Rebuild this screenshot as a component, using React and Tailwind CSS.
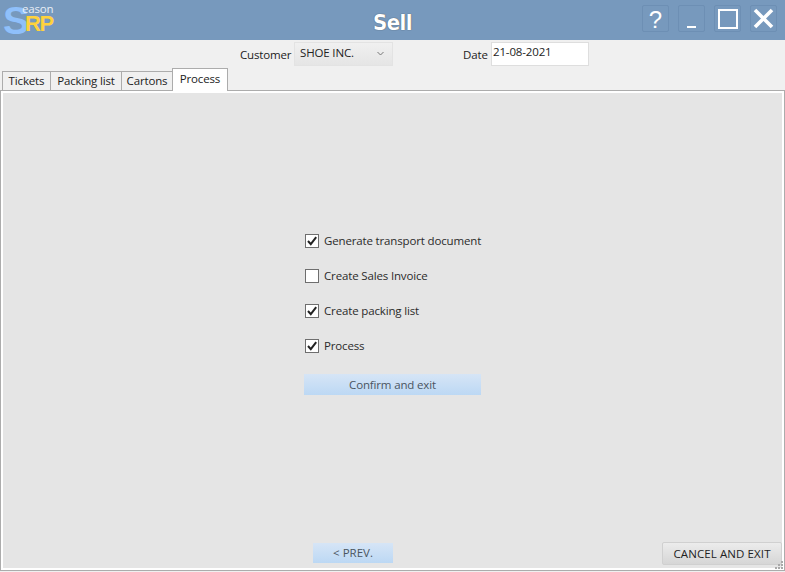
import { useState } from "react"

const font = { fontFamily: '"Open Sans", "Noto Sans", sans-serif' }
const arial = { fontFamily: '"Liberation Sans", sans-serif' }

function WinButton({ children }) {
  return (
    <div className="w-[27px] h-[27px] rounded-[2px] border border-[#6d8fb4] flex items-center justify-center">
      {children}
    </div>
  )
}

function Check({ label, checked }) {
  const [on, setOn] = useState(checked)
  return (
    <div className="flex items-center h-[14px] cursor-default" onClick={() => setOn(!on)}>
      <div className="w-[14px] h-[14px] border border-[#6e6e6e] bg-white flex items-center justify-center">
        {on && (
          <svg width="12" height="12" viewBox="0 0 12 12">
            <path d="M2 6 L4.8 9.2 L10.2 2.2" fill="none" stroke="#222" strokeWidth="2" />
          </svg>
        )}
      </div>
      <span className="ml-[5px] text-[11.5px] leading-none tracking-[-0.15px] text-[#2b2b2b] whitespace-nowrap">{label}</span>
    </div>
  )
}

export default function App() {
  return (
    <div className="w-[785px] h-[572px] flex flex-col bg-[#f0f0f0] overflow-hidden relative" style={font}>
      {/* title bar */}
      <div className="h-[40px] shrink-0 bg-[#7799bd] flex items-center relative">
        <div className="w-[60px] h-[40px] relative shrink-0">
          <span className="absolute left-[3px] top-[5px] text-[39px] leading-[31px] font-bold text-[#8fc0fb]" style={arial}>S</span>
          <span className="absolute left-[22px] top-[3px] text-[11.5px] leading-[12px] tracking-[-0.2px] text-[#e8eef6]">eason</span>
          <span className="absolute left-[25px] top-[15px] text-[22px] leading-[18px] font-bold text-[#ffd23c] tracking-[-1.5px]" style={arial}>RP</span>
        </div>
        <div className="flex-1 flex justify-center pr-[60px]">
          <span className="text-[22px] leading-none font-bold text-white mt-[5px] tracking-[-0.5px] [font-stretch:condensed]" style={{ fontFamily: '"DejaVu Sans", sans-serif', textShadow: "0 0 1px #333" }}>Sell</span>
        </div>
        <div className="absolute right-[8px] top-[5px] flex gap-[9px]">
          <WinButton>
            <span className="text-[24px] leading-none text-white mt-[2px]" style={arial}>?</span>
          </WinButton>
          <WinButton>
            <div className="w-[9px] h-[2px] bg-white mt-[16px]" />
          </WinButton>
          <WinButton>
            <div className="w-[20px] h-[20px] border-[2px] border-white" />
          </WinButton>
          <WinButton>
            <svg width="21" height="21" viewBox="0 0 21 21">
              <path d="M2 2 L19 19 M19 2 L2 19" stroke="#fff" strokeWidth="3.6" />
            </svg>
          </WinButton>
        </div>
      </div>

      {/* customer / date row */}
      <div className="h-[26px] shrink-0 flex items-start text-[11.5px] text-[#222] tracking-[-0.15px]">
        <div className="ml-[240px] mt-[2px] flex items-center h-[24px]">
          <span className="w-[54px] mt-[1px]">Customer</span>
          <div className="w-[99px] h-[24px] bg-gradient-to-b from-[#f0f0f0] to-[#e5e5e5] border border-[#e3e3e3] flex items-center justify-between pl-[5px] pr-[8px]">
            <span className="leading-none -mt-[2px]">SHOE INC.</span>
            <svg width="7" height="5" viewBox="0 0 7 5" className="-mt-[2px]">
              <path d="M0.5 1 L3.5 4 L6.5 1" fill="none" stroke="#777" strokeWidth="1" />
            </svg>
          </div>
        </div>
        <div className="ml-[70px] mt-[2px] flex items-center h-[24px]">
          <span className="w-[28px] mt-[1px]">Date</span>
          <div className="w-[98px] h-[24px] bg-white border border-[#dedede] pl-[1px] pt-[2px] leading-[14px]">21-08-2021</div>
        </div>
      </div>

      {/* tabs */}
      <div className="h-[24px] shrink-0 pl-[2px] flex items-end text-[11.5px] tracking-[-0.15px] text-[#222]">
        <div className="w-[49px] h-[19px] bg-[#f0f0f0] border border-b-0 border-[#acacac] -mr-px flex items-center justify-center">Tickets</div>
        <div className="w-[72px] h-[19px] bg-[#f0f0f0] border border-b-0 border-[#acacac] -mr-px flex items-center justify-center">Packing list</div>
        <div className="w-[52px] h-[19px] bg-[#f0f0f0] border border-b-0 border-[#acacac] -mr-px flex items-center justify-center">Cartons</div>
        <div className="w-[56px] h-[23px] -mb-px z-10 bg-white border border-b-0 border-[#acacac] flex items-center justify-center pb-[2px]">Process</div>
      </div>

      {/* panel */}
      <div className="flex-1 min-h-0 mb-[1px] border border-[#acacac] bg-white p-[2px] flex">
        <div className="flex-1 bg-[#e5e5e5] flex flex-col">
          <div className="flex-1 flex flex-col pt-[141px] pl-[302px]">
            <div className="flex flex-col gap-[21px]">
              <Check label="Generate transport document" checked />
              <Check label="Create Sales Invoice" />
              <Check label="Create packing list" checked />
              <Check label="Process" checked />
            </div>
            <button className="mt-[21px] -ml-[1px] w-[177px] h-[21px] bg-gradient-to-b from-[#d6e5f6] to-[#bcd8f4] text-[11.5px] tracking-[-0.15px] leading-none text-[#4a5561]">
              Confirm and exit
            </button>
          </div>
          <div className="h-[26px] shrink-0 relative flex justify-end items-start">
            <button className="absolute left-[310px] top-[1px] w-[80px] h-[20px] bg-gradient-to-b from-[#d6e5f6] to-[#bcd8f4] text-[11.5px] tracking-[0px] leading-none text-[#4a5561]">
              &lt; PREV.
            </button>
            <button className="w-[120px] h-[23px] rounded-[2px] border border-[#d0d0d0] bg-gradient-to-b from-[#ececec] to-[#d6d6d6] text-[11.5px] leading-none text-[#222] tracking-[0.1px]">
              CANCEL AND EXIT
            </button>
          </div>
        </div>
      </div>

      {/* resize grip */}
      <svg className="absolute right-[1px] bottom-[1px]" width="11" height="10" viewBox="0 0 11 10" fill="#a9a9a9">
        <rect x="8" y="0" width="2" height="2" />
        <rect x="5" y="3" width="2" height="2" />
        <rect x="8" y="3" width="2" height="2" />
        <rect x="2" y="6" width="2" height="2" />
        <rect x="5" y="6" width="2" height="2" />
        <rect x="8" y="6" width="2" height="2" />
      </svg>
    </div>
  )
}
